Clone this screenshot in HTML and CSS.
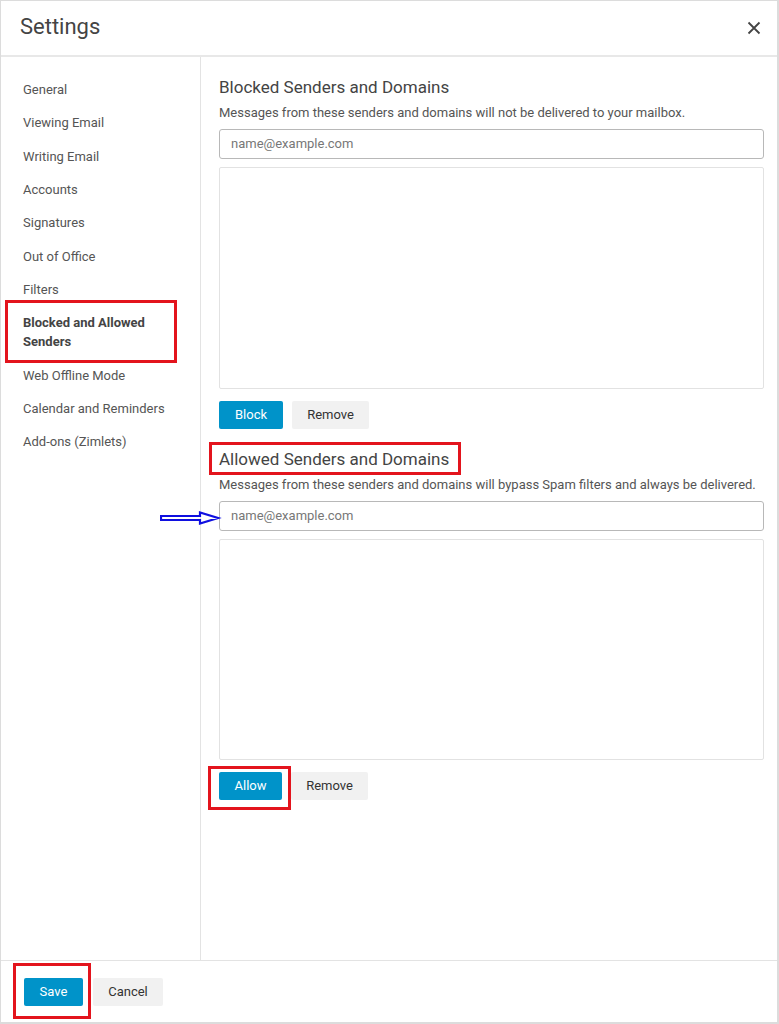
FILE: index.html
```html
<!DOCTYPE html>
<html>
<head>
<meta charset="utf-8">
<link rel="stylesheet" href="styles.css">
</head>
<body>
<div class="dialog">
  <div class="header">
    <div class="title">Settings</div>
    <svg class="close" width="14" height="14" viewBox="0 0 14 14"><path d="M1.5 1.5 L12.5 12.5 M12.5 1.5 L1.5 12.5" stroke="#444" stroke-width="1.8" fill="none"/></svg>
  </div>
  <div class="body">
    <div class="sidebar">
      <div class="nav-item">General</div>
      <div class="nav-item">Viewing Email</div>
      <div class="nav-item">Writing Email</div>
      <div class="nav-item">Accounts</div>
      <div class="nav-item">Signatures</div>
      <div class="nav-item">Out of Office</div>
      <div class="nav-item">Filters</div>
      <div class="nav-item active">Blocked and Allowed<br>Senders</div>
      <div class="nav-item">Web Offline Mode</div>
      <div class="nav-item">Calendar and Reminders</div>
      <div class="nav-item">Add-ons (Zimlets)</div>
    </div>
    <div class="main">
      <div class="section">
        <div class="heading">Blocked Senders and Domains</div>
        <div class="desc">Messages from these senders and domains will not be delivered to your mailbox.</div>
        <div class="input">name@example.com</div>
        <div class="list"></div>
        <div class="buttons">
          <div class="btn primary btn-block">Block</div>
          <div class="btn secondary btn-remove">Remove</div>
        </div>
      </div>
      <div class="section second">
        <div class="heading">Allowed Senders and Domains</div>
        <div class="desc">Messages from these senders and domains will bypass Spam filters and always be delivered.</div>
        <div class="input">name@example.com</div>
        <div class="list list2"></div>
        <div class="buttons">
          <div class="btn primary btn-allow">Allow</div>
          <div class="btn secondary btn-remove">Remove</div>
        </div>
      </div>
    </div>
  </div>
  <div class="footer">
    <div class="btn primary btn-save">Save</div>
    <div class="btn secondary btn-cancel">Cancel</div>
  </div>

  <div class="mark mark-nav"></div>
  <div class="mark mark-heading"></div>
  <div class="mark mark-allow"></div>
  <div class="mark mark-save"></div>
  <svg class="arrow" width="62" height="14" viewBox="0 0 62 14">
    <path d="M1 5 L40 5 L40 1.5 L58 7 L40 12.5 L40 9 L1 9 Z" fill="none" stroke="#1010e0" stroke-width="2.2" stroke-linejoin="miter"/>
  </svg>
</div>
</body>
</html>
```
FILE: styles.css
```css
* { box-sizing: border-box; }
html, body { margin: 0; padding: 0; background: #fff; }
body {
  font-family: Roboto, "Liberation Sans", sans-serif;
  color: #555;
}
.dialog {
  position: relative;
  width: 779px;
  height: 1024px;
  border: 1px solid #dcdcdc;
  border-right: 2px solid #dcdcdc;
  border-bottom: 2px solid #dcdcdc;
  display: flex;
  flex-direction: column;
  background: #fff;
}
.header {
  height: 56px;
  flex: none;
  border-bottom: 2px solid #e8e8e8;
  display: flex;
  align-items: center;
  justify-content: space-between;
  padding: 0 16px 2px 19px;
}
.title {
  font-size: 22px;
  color: #444;
  line-height: 26px;
}
.close { display: block; margin-top: 2px; }
.body {
  flex: 1;
  display: flex;
  min-height: 0;
}
.sidebar {
  width: 200px;
  flex: none;
  border-right: 1px solid #e3e3e3;
  padding: 16px 0 0 22px;
}
.nav-item {
  font-size: 13px;
  line-height: 19px;
  padding: 7px 0 7.33px;
  color: #555;
}
.nav-item.active {
  font-weight: bold;
  color: #444;
}
.main {
  flex: 1;
  padding: 20px 13px 0 18px;
}
.heading {
  font-size: 17px;
  line-height: 20px;
  color: #444;
}
.desc {
  font-size: 13px;
  line-height: 16px;
  margin-top: 8px;
  color: #555;
}
.input {
  margin-top: 8px;
  height: 30px;
  border: 1px solid #b8b8b8;
  border-radius: 3px;
  font-size: 13px;
  line-height: 28px;
  padding-left: 11px;
  color: #777;
}
.list {
  margin-top: 8px;
  height: 222px;
  border: 1px solid #e2e2e2;
  border-radius: 2px;
}
.list2 { height: 221px; }
.buttons {
  display: flex;
  gap: 9px;
  margin-top: 12px;
}
.btn {
  height: 28px;
  line-height: 28px;
  font-size: 13px;
  text-align: center;
  border-radius: 2px;
}
.primary {
  background: #0093c9;
  color: #fff;
}
.secondary {
  background: #f1f1f1;
  color: #333;
}
.btn-block { width: 64px; }
.btn-remove { width: 77px; }
.btn-allow { width: 63px; }
.second { margin-top: 20px; }
.footer {
  height: 62px;
  flex: none;
  border-top: 1px solid #e3e3e3;
  display: flex;
  gap: 10px;
  padding: 17px 0 0 23px;
}
.btn-save { width: 59px; }
.btn-cancel { width: 70px; }

.mark {
  position: absolute;
  border: 3px solid #e3141d;
}
.mark-nav { left: 4px; top: 299px; width: 172px; height: 63px; }
.mark-heading { left: 208px; top: 441px; width: 252px; height: 33px; }
.mark-allow { left: 207px; top: 765px; width: 83px; height: 44px; }
.mark-save { left: 12px; top: 962px; width: 78px; height: 56px; }
.arrow { position: absolute; left: 159px; top: 510px; }
```
